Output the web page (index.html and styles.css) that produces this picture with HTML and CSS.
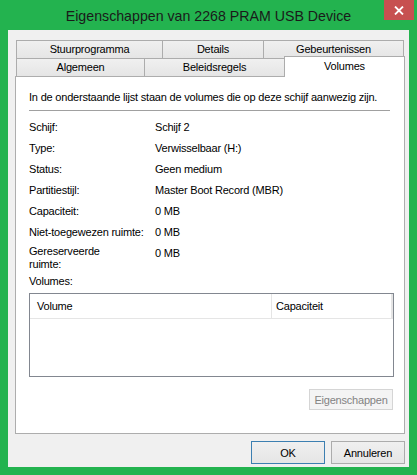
FILE: index.html
```html
<!DOCTYPE html>
<html lang="nl">
<head>
    <meta charset="UTF-8">
    <title>Eigenschappen van 2268 PRAM USB Device</title>
    <link rel="stylesheet" href="styles.css">
</head>
<body>
    <div class="window">
        <div class="titlebar">
            <span class="title">Eigenschappen van 2268 PRAM USB Device</span>
            <span class="close-btn">
                <svg width="10" height="9" viewBox="0 0 10 9">
                    <path d="M1 0.5 L9 8.5 M9 0.5 L1 8.5" stroke="#fff" stroke-width="1.8" fill="none"/>
                </svg>
            </span>
        </div>

        <div class="client">
            <div class="tabs">
                <div class="tab-row">
                    <div class="tab tab-stuur">Stuurprogramma</div>
                    <div class="tab tab-details">Details</div>
                    <div class="tab tab-events">Gebeurtenissen</div>
                </div>
                <div class="tab-row front">
                    <div class="tab tab-general">Algemeen</div>
                    <div class="tab tab-policy">Beleidsregels</div>
                    <div class="tab tab-volumes active">Volumes</div>
                </div>
            </div>

            <div class="panel">
                <p class="intro">In de onderstaande lijst staan de volumes die op deze schijf aanwezig zijn.</p>
                <div class="separator"></div>

                <div class="props">
                    <div class="prop"><span class="label">Schijf:</span><span class="value">Schijf 2</span></div>
                    <div class="prop"><span class="label">Type:</span><span class="value">Verwisselbaar (H:)</span></div>
                    <div class="prop"><span class="label">Status:</span><span class="value">Geen medium</span></div>
                    <div class="prop"><span class="label">Partitiestijl:</span><span class="value">Master Boot Record (MBR)</span></div>
                    <div class="prop"><span class="label">Capaciteit:</span><span class="value">0 MB</span></div>
                    <div class="prop"><span class="label">Niet-toegewezen ruimte:</span><span class="value">0 MB</span></div>
                    <div class="prop tall"><span class="label">Gereserveerde<br>ruimte:</span><span class="value">0 MB</span></div>
                </div>

                <div class="volumes-label">Volumes:</div>
                <div class="listview">
                    <div class="lv-header">
                        <div class="col col-volume">Volume</div>
                        <div class="col col-cap">Capaciteit</div>
                        <div class="col col-rest"></div>
                    </div>
                </div>

                <div class="panel-actions">
                    <button class="btn btn-props" disabled>Eigenschappen</button>
                </div>
            </div>

            <div class="dialog-buttons">
                <button class="btn default">OK</button>
                <button class="btn">Annuleren</button>
            </div>
        </div>
    </div>
</body>
</html>
```

FILE: styles.css
```css
* {
    margin: 0;
    padding: 0;
    box-sizing: border-box;
}

body {
    font-family: 'Liberation Sans', Arial, sans-serif;
    font-size: 11px;
    letter-spacing: -0.2px;
    color: #000;
    background: #23b34f;
}

.window {
    width: 417px;
    height: 475px;
    background: #23b34f;
    display: flex;
    flex-direction: column;
}

/* title bar */
.titlebar {
    height: 30px;
    position: relative;
    display: flex;
    align-items: center;
    justify-content: center;
    padding-top: 2px;
}

.title {
    font-size: 14.2px;
    letter-spacing: 0;
    color: #1a1a1a;
}

.close-btn {
    position: absolute;
    top: 0;
    left: 384px;
    width: 30px;
    height: 20px;
    background: #c75050;
    display: flex;
    align-items: center;
    justify-content: center;
}

/* client area */
.client {
    flex: 1;
    margin: 0 8px 8px;
    background: #f0f0f0;
    padding-top: 10px;
}

.tabs {
    padding-left: 8px;
}

.tab-row {
    display: flex;
    align-items: flex-start;
}

.tab-row.front {
    position: relative;
    z-index: 2;
}

.tab {
    height: 18px;
    line-height: 17px;
    text-align: center;
    border: 1px solid #acacac;
    border-bottom: none;
    background: linear-gradient(#f0f0f0, #e5e5e5);
}

.tab + .tab {
    margin-left: -1px;
}

.tab-stuur { width: 147px; }
.tab-details { width: 102px; }
.tab-events { width: 141px; }
.tab-general { width: 129px; }
.tab-policy { width: 141px; }
.tab-volumes { width: 121px; }

.tab.active {
    height: 21px;
    line-height: 18px;
    margin-top: -2px;
    margin-bottom: -1px;
    background: #fff;
}

/* property page */
.panel {
    margin-left: 7px;
    width: 390px;
    height: 358px;
    background: #fff;
    border: 1px solid #adadad;
    padding: 13px 10px 0 13px;
}

.intro {
    line-height: 15px;
}

.separator {
    margin-top: 5px;
    width: 361px;
    height: 1px;
    background: #a0a0a0;
}

.props {
    margin-top: 6px;
}

.prop {
    display: flex;
    height: 21px;
    line-height: 21px;
}

.prop .label {
    width: 126px;
}

.prop.tall {
    height: 28px;
    line-height: 13px;
    padding-top: 2px;
}

.prop.tall .value {
    padding-top: 2px;
}

.volumes-label {
    margin-top: 3px;
    line-height: 15px;
}

.listview {
    margin-top: 4px;
    width: 365px;
    height: 84px;
    border: 1px solid #828790;
}

.lv-header {
    display: flex;
    height: 25px;
    border-bottom: 1px solid #e5e5e5;
}

.col {
    line-height: 24px;
    border-right: 1px solid #e5e5e5;
}

.col-volume {
    width: 242px;
    padding-left: 7px;
}

.col-cap {
    width: 120px;
    padding-left: 4px;
}

.col-rest {
    width: 1px;
}

.panel-actions {
    display: flex;
    justify-content: flex-end;
    margin-top: 12px;
    width: 365px;
}

/* buttons */
.btn {
    font-family: inherit;
    font-size: 11px;
    letter-spacing: -0.2px;
    color: #000;
    height: 23px;
    width: 74px;
    border: 1px solid #acacac;
    background: linear-gradient(#f0f0f0, #e5e5e5);
}

.btn.default {
    border-color: #3c7fb1;
}

.btn-props {
    width: 84px;
    height: 21px;
    margin-right: 1px;
    color: #838383;
    background: #f4f4f4;
    border-color: #d5d5d5;
}

.dialog-buttons {
    display: flex;
    justify-content: flex-end;
    gap: 6px;
    margin-top: 7px;
    padding-right: 4px;
}
```
